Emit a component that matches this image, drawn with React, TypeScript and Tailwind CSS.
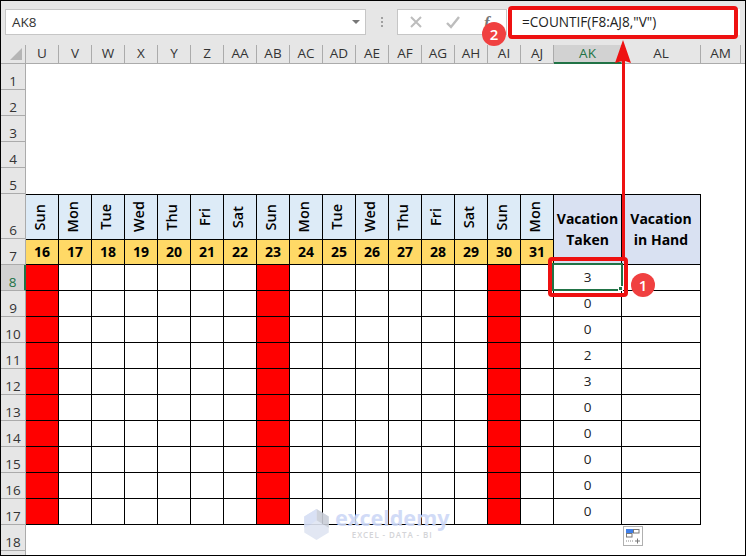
const columns = ["U", "V", "W", "X", "Y", "Z", "AA", "AB", "AC", "AD", "AE", "AF", "AG", "AH", "AI", "AJ", "AK", "AL", "AM", ""];
const dayNames = ["Sun", "Mon", "Tue", "Wed", "Thu", "Fri", "Sat", "Sun", "Mon", "Tue", "Wed", "Thu", "Fri", "Sat", "Sun", "Mon"];
const dates = [16, 17, 18, 19, 20, 21, 22, 23, 24, 25, 26, 27, 28, 29, 30, 31];
const taken = [3, 0, 0, 2, 3, 0, 0, 0, 0, 0];
const redDays = [0, 7, 14];

const rowGrid = "grid grid-cols-[25px_repeat(16,33px)_68px_79px_40px_1fr]";

function RowHeader({ label, h, active }: { label: number; h: string; active?: boolean }) {
  return (
    <div
      className={`${h} flex items-end justify-center border-b border-r border-[#ababab] text-[13.5px] leading-[16px] ${
        active ? "border-r-2 border-r-[#217346] bg-[#d2d2d2] text-[#217346]" : "bg-[#e6e6e6] text-[#333]"
      }`}
    >
      {label}
    </div>
  );
}

export default function App() {
  return (
    <div className="relative h-[556px] w-[746px] overflow-hidden border border-black bg-white font-['Open_Sans','Liberation_Sans',sans-serif] text-black">
      {/* formula bar */}
      <div className="flex h-[44px] items-start bg-[#e6e6e6] pt-[8px]">
        <div className="ml-[4px] flex h-[26px] w-[361px] items-center justify-between border border-[#c6c6c6] bg-white pl-[6px] pr-[5px] text-[13.5px] text-[#333]">
          AK8
          <span className="h-0 w-0 border-x-[4px] border-t-[4px] border-x-transparent border-t-[#777]" />
        </div>
        <div className="flex h-[26px] w-[31px] flex-col items-center justify-center gap-[2px]">
          <span className="h-[2px] w-[2px] bg-[#a0a0a0]" />
          <span className="h-[2px] w-[2px] bg-[#a0a0a0]" />
          <span className="h-[2px] w-[2px] bg-[#a0a0a0]" />
        </div>
        <div className="flex h-[26px] w-[110px] items-center border border-[#c6c6c6] bg-white">
          <svg viewBox="0 0 14 14" className="ml-[11px] h-[14px] w-[14px]" fill="none" stroke="#bdbdbd" strokeWidth="2">
            <path d="M2 2l10 10M12 2L2 12" />
          </svg>
          <svg viewBox="0 0 14 14" className="ml-[23px] h-[14px] w-[14px]" fill="none" stroke="#bdbdbd" strokeWidth="2.4">
            <path d="M1 8l4 4 8-10" />
          </svg>
          <span className="ml-[24px] font-['Liberation_Serif',serif] text-[17px] font-bold italic leading-none text-[#777]">f</span>
        </div>
        <div className="flex h-[26px] w-[233px] items-center bg-white pl-[15px] text-[13.6px] text-[#222]">
          =COUNTIF(F8:AJ8,"V")
        </div>
      </div>

      {/* column letters */}
      <div className={`${rowGrid} h-[19px] border-b border-[#ababab] bg-[#e6e6e6]`}>
        <div className="relative border-r border-[#ababab]">
          <span className="absolute bottom-[3px] right-[3px] h-0 w-0 border-b-[12px] border-l-[12px] border-b-[#b5b5b5] border-l-transparent" />
        </div>
        {columns.map((c) => (
          <div
            key={c}
            className={`flex items-center justify-center text-[13.5px] leading-none ${
              c === "AK"
                ? "-mb-[1px] border-b-2 border-r border-b-[#217346] border-r-[#ababab] bg-[#d2d2d2] text-[#217346]"
                : c === ""
                  ? ""
                  : "border-r border-[#ababab] text-[#333]"
            }`}
          >
            {c}
          </div>
        ))}
      </div>

      {/* rows 1 to 5 */}
      {[1, 2, 3, 4, 5].map((r) => (
        <div key={r} className={rowGrid}>
          <RowHeader label={r} h="h-[26px]" />
        </div>
      ))}

      {/* row 6 and 7 */}
      <div className={rowGrid}>
        <RowHeader label={6} h="h-[45px]" />
        {dayNames.map((d, i) => (
          <div
            key={i}
            className="flex h-[45px] items-center justify-center border-r border-t border-black bg-[#ddebf7] pr-[3px]"
          >
            <span className="rotate-180 text-[14.5px] font-semibold leading-none [writing-mode:vertical-rl]">{d}</span>
          </div>
        ))}
        <div className="row-span-2 flex items-center justify-center border-b border-r border-t border-black bg-[#d9e1f2] pb-[2px] text-center text-[14px] font-bold leading-[21px]">
          Vacation
          <br />
          Taken
        </div>
        <div className="row-span-2 flex items-center justify-center border-b border-r border-t border-black bg-[#d9e1f2] pb-[2px] text-center text-[14px] font-bold leading-[21px]">
          Vacation
          <br />
          in Hand
        </div>
        <div className="col-span-2" />
        <RowHeader label={7} h="h-[26px]" />
        {dates.map((d) => (
          <div
            key={d}
            className="flex h-[26px] items-center justify-center border-b border-r border-t border-black bg-[#ffd966] text-[14px] font-bold leading-none"
          >
            {d}
          </div>
        ))}
      </div>

      {/* rows 8 to 17 */}
      {taken.map((v, r) => (
        <div key={r} className={rowGrid}>
          <RowHeader label={r + 8} h="h-[26px]" active={r === 0} />
          {dates.map((_, i) => (
            <div
              key={i}
              className={`h-[26px] border-b border-r border-black ${redDays.includes(i) ? "bg-[#ff0000]" : "bg-white"}`}
            />
          ))}
          <div className="flex h-[26px] items-center justify-center border-b border-r border-black text-[13.5px] leading-none text-[#222]">
            {v}
          </div>
          <div className="h-[26px] border-b border-r border-black" />
        </div>
      ))}

      {/* row 18 */}
      <div className={rowGrid}>
        <RowHeader label={18} h="h-[26px]" />
      </div>
      <div className="h-[4px] w-[25px] border-r border-[#ababab] bg-[#e6e6e6]" />

      {/* selected cell */}
      <div className="absolute left-[551px] top-[262px] h-[28px] w-[71px] border-2 border-[#217346]">
        <span className="absolute -bottom-[2px] -right-[2px] h-[5px] w-[5px] border border-white bg-[#217346]" />
      </div>

      {/* annotations */}
      <div className="absolute left-[507px] top-[5px] h-[33px] w-[230px] rounded-[4px] border-4 border-[#ee1111]" />
      <div className="absolute left-[547px] top-[256px] h-[40px] w-[80px] rounded-[4px] border-4 border-[#ee1111]" />
      <svg className="absolute left-[608px] top-[38px] h-[220px] w-[30px]" viewBox="0 0 30 220" fill="#ee1111">
        <path d="M6 24 L14 1 L22 24 L16 22 L16 220 L13 220 L13 22 Z" />
      </svg>
      <div className="absolute left-[630px] top-[272px] flex h-[24px] w-[24px] items-center justify-center rounded-full bg-[#f04040] text-[15px] font-semibold text-white">
        1
      </div>
      <div className="absolute left-[481px] top-[21px] flex h-[24px] w-[24px] items-center justify-center rounded-full bg-[#f04040] text-[15px] font-semibold text-white">
        2
      </div>

      {/* paste options */}
      <div className="absolute left-[622px] top-[525px] h-[20px] w-[20px] border border-[#b0b0b0] bg-white">
        <svg viewBox="0 0 18 18" className="h-[18px] w-[18px]" fill="none">
          <rect x="2" y="2" width="7" height="4" fill="#3f7fe8" />
          <rect x="9.5" y="2.5" width="5.5" height="3.5" stroke="#777" />
          <rect x="2.5" y="6.5" width="5.5" height="3.5" stroke="#777" />
          <path d="M2 14h7" stroke="#888" strokeDasharray="1 1" />
          <path d="M11 14h5M13.5 11.5v5" stroke="#777" />
        </svg>
      </div>

      {/* watermark */}
      <div className="pointer-events-none absolute left-[301px] top-[507px] flex items-start gap-[4px] opacity-90">
        <svg viewBox="0 0 30 34" className="mt-[1px] h-[32px] w-[29px]">
          <path d="M15 0 L28 8 L28 25 L15 33 L2 25 L2 8 Z" fill="#dfe5f2" />
          <path d="M15 0 L28 8 L28 20 L15 12 Z" fill="#c9ced8" />
          <path d="M2 8 L15 0 L15 12 L8 17 L2 20 Z" fill="#d5def5" />
        </svg>
        <div className="-mt-[2px] flex flex-col items-center">
          <span className="font-['Noto_Sans',sans-serif] text-[21.5px] font-bold leading-[24px] text-[#cdd8f7]">exceldemy</span>
          <span className="text-[8px] font-semibold leading-[9px] tracking-[0.9px] text-[#d0d0d4]">EXCEL - DATA - BI</span>
        </div>
      </div>
    </div>
  );
}
